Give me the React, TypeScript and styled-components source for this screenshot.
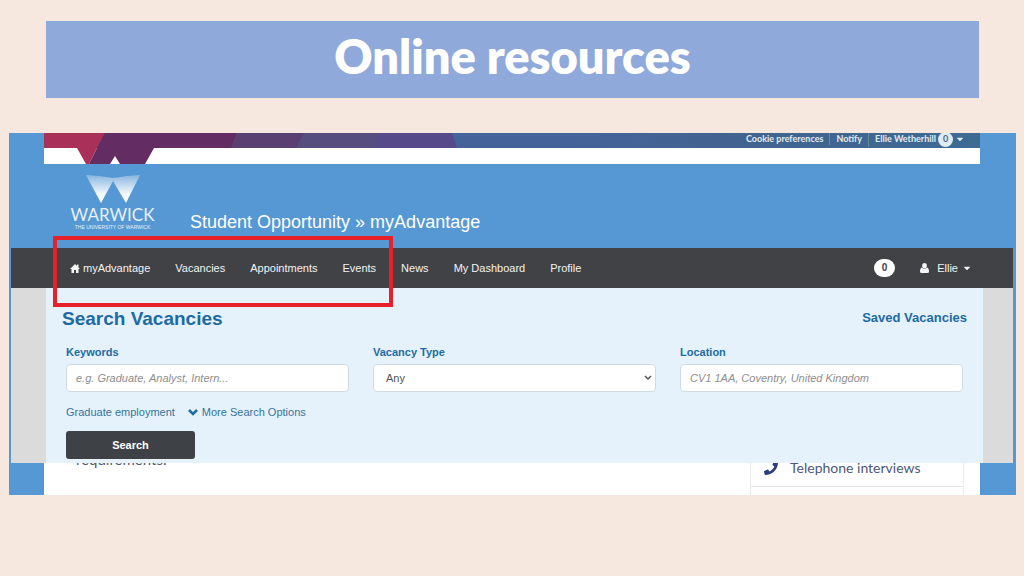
import React from "react";
import styled, { createGlobalStyle } from "styled-components";
import { FaCaretDown, FaPhone } from "react-icons/fa";

const GlobalStyle = createGlobalStyle`
  *, *::before, *::after { box-sizing: border-box; }
  body { margin: 0; background: #f7e8df; font-family: "Liberation Sans", Arial, sans-serif; }
`;

const sans = `"Liberation Sans", Arial, sans-serif`;
const lato = `Lato, "Open Sans", sans-serif`;

const Slide = styled.main`
  display: flex;
  flex-direction: column;
  gap: 35px;
  min-height: 100vh;
  padding: 21px 8px 24px 9px;
  background: #f7e8df;
`;

const Banner = styled.header`
  display: flex;
  justify-content: center;
  margin: 0 37px;
  padding: 6px 0 13px;
  background: #90a9db;
`;

const BannerTitle = styled.h1`
  margin: 0;
  font: 800 47px/58px ${lato};
  color: #fff;
`;

const Site = styled.section`
  background: #5698d3;
`;

const Masthead = styled.div`
  display: flex;
  justify-content: space-between;
  height: 31px;
  margin: 0 36px 0 35px;
  overflow: hidden;
  background: linear-gradient(90deg, #46629b 55%, #41638f 75%, #3d6b93 100%) 0 0 / 100% 15px no-repeat #fff;
`;

const MastheadArt = styled.svg`
  flex: none;
  width: 440px;
  height: 31px;
`;

const Utility = styled.nav`
  display: flex;
  align-items: center;
  height: 12px;
  padding-right: 15px;
  font: 700 9px/12px ${lato};
  white-space: nowrap;
`;

const UtilityLink = styled.a<{ $divided?: boolean }>`
  display: flex;
  align-items: center;
  gap: 2px;
  color: #e3ebf2;
  text-decoration: none;
  padding-left: ${(p) => (p.$divided ? 6 : 0)}px;
  margin-left: ${(p) => (p.$divided ? 6 : 0)}px;
  border-left: ${(p) => (p.$divided ? "1px solid #6688a5" : "0")};
`;

const Count = styled.span`
  display: grid;
  place-items: center;
  width: 15px;
  height: 15px;
  border-radius: 8px;
  background: #dfeaf3;
  color: #3d6b93;
`;

const Brand = styled.div`
  display: flex;
  align-items: flex-start;
  gap: 36px;
  height: 84px;
  padding: 10px 63px 0 62px;
`;

const Crest = styled.a`
  display: flex;
  flex-direction: column;
  align-items: center;
  width: 83px;
  color: #e6f1fa;
  text-decoration: none;
  white-space: nowrap;
`;

const CrestMark = styled.svg`
  width: 56px;
  height: 30px;
`;

const CrestName = styled.span`
  margin-top: 2px;
  font: 400 17px/18px ${lato};
`;

const CrestLine = styled.span`
  font: 400 5px/6px ${sans};
`;

const SiteTitle = styled.h2`
  margin: 36px 0 0;
  font: 400 18px/24px ${sans};
  color: #fff;
`;

const NavBar = styled.nav`
  position: relative;
  display: flex;
  justify-content: space-between;
  align-items: center;
  height: 40px;
  margin: 0 3px 0 2px;
  padding: 0 41px 0 59px;
  background: #404246;
`;

const NavGroup = styled.div`
  display: flex;
  align-items: center;
  gap: 25px;
`;

const NavLink = styled.a`
  display: flex;
  align-items: center;
  gap: 3px;
  font: 400 11px/16px ${sans};
  color: #f4f4f4;
  text-decoration: none;
`;

const Pill = styled.span`
  padding: 0 8px;
  border-radius: 9px;
  background: #fff;
  color: #404246;
  font: 700 10px/18px ${sans};
`;

const UserButton = styled.button`
  display: flex;
  align-items: center;
  gap: 4px;
  padding: 0;
  border: 0;
  background: none;
  font: 400 11px/16px ${sans};
  color: #f4f4f4;
`;

const UserName = styled.span`
  margin-left: 4px;
`;

const Highlight = styled.div`
  position: absolute;
  top: -12px;
  left: 42px;
  width: 340px;
  height: 71px;
  border: 4px solid #e8202a;
  pointer-events: none;
`;

const Panel = styled.form`
  margin: 0 3px 0 2px;
  padding: 19px 20px 4px;
  border: solid #dbdbdb;
  border-width: 0 30px 0 35px;
  background: #e5f2fb;
`;

const PanelHead = styled.div`
  display: flex;
  justify-content: space-between;
  margin: 0 -4px 13px;
`;

const PanelTitle = styled.h3`
  margin: 0;
  font: 700 19px/24px ${sans};
  color: #1d6ba3;
`;

const SavedLink = styled.a`
  font: 700 13px/22px ${sans};
  color: #1d6ba3;
  text-decoration: none;
`;

const Fields = styled.div`
  display: grid;
  grid-template-columns: repeat(3, 1fr);
  gap: 24px;
`;

const Field = styled.div`
  display: flex;
  flex-direction: column;
  gap: 4px;
`;

const Label = styled.label`
  font: 700 11px/16px ${sans};
  color: #1d6ba3;
`;

const control = `
  width: 100%;
  height: 28px;
  border: 1px solid #cfdbe3;
  border-radius: 4px;
  background: #fff;
  color: #555;
`;

const TextInput = styled.input`
  ${control}
  padding: 0 9px;
  font: 400 11px/16px ${sans};
  &::placeholder { color: #8e8e8e; font-style: italic; opacity: 1; }
`;

const SelectWrap = styled.div`
  display: grid;
  align-items: center;
  > * { grid-area: 1 / 1; }
`;

const Select = styled.select`
  ${control}
  appearance: none;
  padding: 0 12px;
  font: 400 11px/16px ${sans};
`;

const SelectArrow = styled.svg`
  justify-self: end;
  width: 8px;
  height: 6px;
  margin-right: 4px;
  pointer-events: none;
`;

const Options = styled.div`
  display: flex;
  gap: 13px;
  margin: 12px 0 11px;
`;

const OptionLink = styled.a`
  display: flex;
  align-items: center;
  gap: 4px;
  font: 400 11px/16px ${sans};
  color: #35729f;
  text-decoration: none;
  svg { color: #1d6ba3; }
`;

const SearchButton = styled.button`
  display: block;
  width: 129px;
  height: 28px;
  padding: 0;
  border: 0;
  border-radius: 3px;
  background: #3e4145;
  color: #fff;
  font: 700 11px/16px ${sans};
`;

const Below = styled.div`
  display: flex;
  justify-content: space-between;
  align-items: flex-start;
  height: 32px;
  margin: 0 36px 0 35px;
  padding: 0 16px 0 32px;
  overflow: hidden;
  background: #fff;
`;

const Paragraph = styled.p`
  margin: -14px 0 0;
  font: 400 15px/20px ${lato};
  color: #555b66;
`;

const Aside = styled.aside`
  width: 214px;
  height: 32px;
  border: solid #ececf0;
  border-width: 0 1px;
`;

const AsideLink = styled.a`
  display: flex;
  align-items: center;
  gap: 12px;
  height: 38px;
  margin-top: -14px;
  padding-left: 13px;
  border-bottom: 1px solid #e6e6ea;
  font: 400 14px/20px ${lato};
  color: #4d5878;
  text-decoration: none;
  svg { color: #2d3d7c; }
`;

const HomeIcon = () => (
  <svg width="10" height="9" viewBox="0 0 20 18" fill="currentColor" aria-hidden="true">
    <path d="M10 0L14 4V1H17V7L20 10H17V18H12V12H8V18H3V10H0Z" />
  </svg>
);

const PersonIcon = () => (
  <svg width="9" height="10" viewBox="0 0 18 20" fill="currentColor" aria-hidden="true">
    <ellipse cx="9" cy="5.5" rx="4.7" ry="5.5" />
    <path d="M4 9C1 10 0 13 0 17Q0 20 3 20H15Q18 20 18 17C18 13 17 10 14 9Q9 14 4 9Z" />
  </svg>
);

const ChevronIcon = () => (
  <svg width="10" height="8" viewBox="0 0 20 16" aria-hidden="true">
    <path d="M2 4L10 12L18 4" fill="none" stroke="currentColor" strokeWidth="5" />
  </svg>
);

const navItems = ["Vacancies", "Appointments", "Events", "News", "My Dashboard", "Profile"];

export default function App() {
  return (
    <>
      <GlobalStyle />
      <Slide>
        <Banner>
          <BannerTitle>Online resources</BannerTitle>
        </Banner>
        <Site>
          <Masthead>
            <MastheadArt viewBox="0 0 440 31" aria-hidden="true">
              <rect width="440" height="15" fill="#5b4579" />
              <path d="M195 0H267V15H188Z" fill="#5a4072" />
              <path d="M260 0H336V15H252Z" fill="#554e7e" />
              <path d="M336 0H408L413 15H332Z" fill="#564a8b" />
              <path d="M408 0H440V15H413Z" fill="#46629b" />
              <path d="M0 0H61L53 15H0Z" fill="#a83059" />
              <path d="M61 0H193L187 15H53Z" fill="#632d63" />
              <path d="M33 15H53L45 31H42Z" fill="#a83059" />
              <path d="M53 15H110L101 31H76L71 23L66 31H45Z" fill="#632d63" />
            </MastheadArt>
            <Utility aria-label="Account">
              <UtilityLink href="#">Cookie preferences</UtilityLink>
              <UtilityLink href="#" $divided>Notify</UtilityLink>
              <UtilityLink href="#" $divided>
                Ellie Wetherhill <Count>0</Count> <FaCaretDown size={10} />
              </UtilityLink>
            </Utility>
          </Masthead>
          <Brand>
            <Crest href="#">
              <CrestMark viewBox="0 0 56 30" aria-hidden="true">
                <defs>
                  <linearGradient id="fade" x1="0" y1="0" x2="0" y2="1">
                    <stop offset="0" stopColor="#fff" stopOpacity="0.3" />
                    <stop offset="0.7" stopColor="#fff" stopOpacity="0.95" />
                    <stop offset="1" stopColor="#fff" />
                  </linearGradient>
                </defs>
                <path d="M1 1L14 2L28 4L42 2L55 1L41 29L28 7L16 29Z" fill="url(#fade)" />
              </CrestMark>
              <CrestName>WARWICK</CrestName>
              <CrestLine>THE UNIVERSITY OF WARWICK</CrestLine>
            </Crest>
            <SiteTitle>Student Opportunity » myAdvantage</SiteTitle>
          </Brand>
          <NavBar aria-label="Main">
            <NavGroup>
              <NavLink href="#"><HomeIcon />myAdvantage</NavLink>
              {navItems.map((item) => (
                <NavLink href="#" key={item}>{item}</NavLink>
              ))}
            </NavGroup>
            <NavGroup>
              <Pill>0</Pill>
              <UserButton type="button">
                <PersonIcon />
                <UserName>Ellie</UserName>
                <FaCaretDown size={10} />
              </UserButton>
            </NavGroup>
            <Highlight />
          </NavBar>
          <Panel>
            <PanelHead>
              <PanelTitle>Search Vacancies</PanelTitle>
              <SavedLink href="#">Saved Vacancies</SavedLink>
            </PanelHead>
            <Fields>
              <Field>
                <Label htmlFor="keywords">Keywords</Label>
                <TextInput id="keywords" placeholder="e.g. Graduate, Analyst, Intern..." />
              </Field>
              <Field>
                <Label htmlFor="type">Vacancy Type</Label>
                <SelectWrap>
                  <Select id="type"><option>Any</option></Select>
                  <SelectArrow viewBox="0 0 8 6" aria-hidden="true">
                    <path d="M1 1L4 4L7 1" fill="none" stroke="#555" strokeWidth="1.5" />
                  </SelectArrow>
                </SelectWrap>
              </Field>
              <Field>
                <Label htmlFor="location">Location</Label>
                <TextInput id="location" placeholder="CV1 1AA, Coventry, United Kingdom" />
              </Field>
            </Fields>
            <Options>
              <OptionLink href="#">Graduate employment</OptionLink>
              <OptionLink href="#"><ChevronIcon />More Search Options</OptionLink>
            </Options>
            <SearchButton type="button">Search</SearchButton>
          </Panel>
          <Below>
            <Paragraph>requirements.</Paragraph>
            <Aside>
              <AsideLink href="#"><FaPhone size={14} />Telephone interviews</AsideLink>
            </Aside>
          </Below>
        </Site>
      </Slide>
    </>
  );
}
